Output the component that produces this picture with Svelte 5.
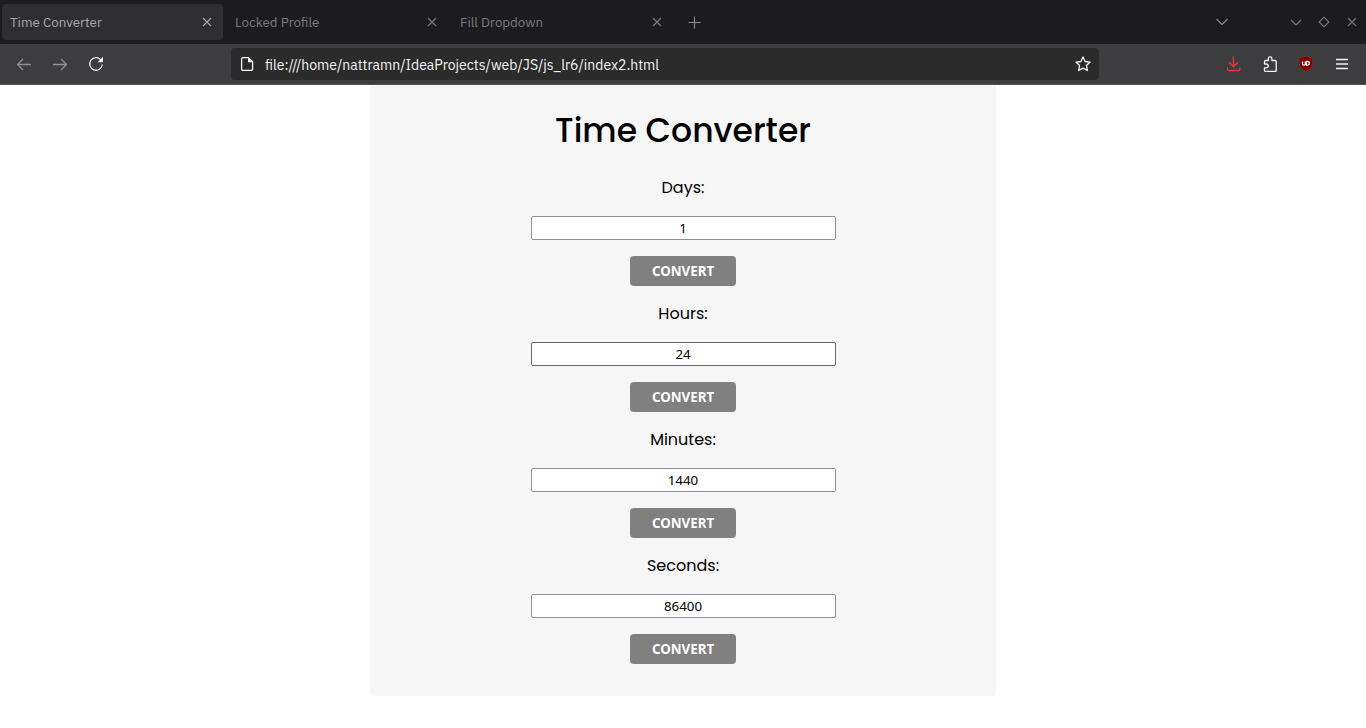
<script>
  const tabs = ['Time Converter', 'Locked Profile', 'Fill Dropdown'];
  const seconds = { days: 86400, hours: 3600, minutes: 60, seconds: 1 };
  const units = [
    { id: 'days', label: 'Days' },
    { id: 'hours', label: 'Hours' },
    { id: 'minutes', label: 'Minutes' },
    { id: 'seconds', label: 'Seconds' }
  ];
  let active = $state(0);
  let address = $state('file:///home/nattramn/IdeaProjects/web/JS/js_lr6/index2.html');
  let values = $state({ days: '1', hours: '24', minutes: '1440', seconds: '86400' });

  function convert(id) {
    const total = Number(values[id]) * seconds[id];
    for (const unit of units) values[unit.id] = String(total / seconds[unit.id]);
  }
</script>

<header>
  <div class="tabbar">
    {#each tabs as tab, i}
      <div class="tab" class:active={active === i}>
        <button class="tab-title" onclick={() => (active = i)}>{tab}</button>
        <button class="close" aria-label="Close tab">
          <svg width="16" height="16" viewBox="0 0 16 16"><path d="M4 4l8 8M12 4l-8 8" /></svg>
        </button>
      </div>
    {/each}
    <button class="icon new-tab" aria-label="New tab">
      <svg width="16" height="16" viewBox="0 0 16 16"><path d="M8.500 2.500v12M2.500 8.500h12" /></svg>
    </button>
    <div class="window-controls">
      <button class="icon list-tabs" aria-label="List all tabs">
        <svg width="16" height="16" viewBox="0 0 16 16"><path d="M2.500 5l5.500 5.500L13.500 5" /></svg>
      </button>
      <button class="window" aria-label="Minimize">
        <svg width="16" height="16" viewBox="0 0 16 16"><path d="M3 6l5 5 5-5" /></svg>
      </button>
      <button class="window" aria-label="Maximize">
        <svg width="16" height="16" viewBox="0 0 16 16"><path d="M8 3.200l4.800 4.800L8 12.800 3.200 8z" /></svg>
      </button>
      <button class="window" aria-label="Close window">
        <svg width="16" height="16" viewBox="0 0 16 16"><path d="M4 4l8 8M12 4l-8 8" /></svg>
      </button>
    </div>
  </div>

  <nav class="toolbar">
    <button class="icon dim" aria-label="Back">
      <svg width="16" height="16" viewBox="0 0 16 16"><path d="M15 8.500H1.800M7 3L1.500 8.500 7 14" /></svg>
    </button>
    <button class="icon dim" aria-label="Forward">
      <svg width="16" height="16" viewBox="0 0 16 16"><path d="M1 8.500h13.200M9 3l5.500 5.500L9 14" /></svg>
    </button>
    <button class="icon" aria-label="Reload">
      <svg width="16" height="16" viewBox="0 0 16 16">
        <path d="M12.700 3.700A6.300 6.300 0 1 0 14.300 8.500" />
        <path class="solid" d="M15 .8v5.400H9.600z" />
      </svg>
    </button>
    <div class="spacer"></div>
    <div class="address">
      <svg width="16" height="16" viewBox="0 0 16 16">
        <path d="M3.800 1.700h5.700l4.100 4.100v7.300a1.200 1.200 0 0 1-1.200 1.200H3.800a1.200 1.200 0 0 1-1.200-1.200V2.900a1.200 1.200 0 0 1 1.200-1.200z" />
        <path class="solid" d="M9 1.500v4.800h4.800z" />
      </svg>
      <input type="text" aria-label="Address" bind:value={address} />
      <button class="star" aria-label="Bookmark this page">
        <svg width="16" height="16" viewBox="0 0 16 16">
          <path d="M8 .9l2.100 4.600 5 .6-3.700 3.400 1 5L8 12.100l-4.400 2.400 1-5L.9 6.100l5-.6z" />
        </svg>
      </button>
    </div>
    <div class="spacer"></div>
    <button class="icon download" aria-label="Downloads">
      <svg width="16" height="16" viewBox="0 0 16 16">
        <path d="M7.500 .5v10.300M3 6.300l4.500 4.500L12 6.300M1.500 11.500v1.700q0 1.300 1.300 1.300h9.700q1.300 0 1.300-1.300v-1.700" />
      </svg>
    </button>
    <button class="icon" aria-label="Extensions">
      <svg width="16" height="16" viewBox="0 0 16 16">
        <path d="M2.500 8V5.500q0-1 1-1h2.800V2.700a1.800 1.800 0 0 1 3.600 0v1.800h3.300q1 0 1 1v9q0 1-1 1H3.500q-1 0-1-1v-2.700h1.800a1.800 1.800 0 0 0 0-3.800z" />
      </svg>
    </button>
    <button class="icon" aria-label="uBlock Origin">
      <svg width="16" height="16" viewBox="0 0 16 16">
        <path class="shield" d="M8 0C6 1.300 3.600 1.700 1.300 1.700V7c0 4.300 2.500 6.600 6.700 8.700 4.200-2.100 6.700-4.400 6.700-8.700V1.700C12.400 1.700 10 1.300 8 0z" />
        <path d="M4.500 5.500v2.200a1.400 1.400 0 0 0 2.800 0V5.500M8.400 5.500v3.600h1.200a1.800 1.800 0 0 0 0-3.600z" />
      </svg>
    </button>
    <button class="icon" aria-label="Open application menu">
      <svg width="16" height="16" viewBox="0 0 16 16"><path d="M2 3.500h12M2 8h12M2 12.500h12" /></svg>
    </button>
  </nav>
</header>

<main>
  <h1>Time Converter</h1>
  {#each units as unit}
    <form onsubmit={(e) => { e.preventDefault(); convert(unit.id); }}>
      <label for={unit.id}>{unit.label}:</label>
      <input id={unit.id} class:hovered={unit.id === 'hours'} type="text" bind:value={values[unit.id]} />
      <button type="submit">CONVERT</button>
    </form>
  {/each}
</main>

<style>
  :global(body) {
    margin: 0;
    background: #fff;
  }

  header button,
  header input {
    font-family: 'IBM Plex Sans', Roboto, sans-serif;
  }

  header button {
    display: flex;
    align-items: center;
    justify-content: center;
    flex: none;
    padding: 0;
    border: 0;
    background: none;
    color: inherit;
  }

  svg {
    display: block;
    flex: none;
    fill: none;
    stroke: currentColor;
    stroke-width: 1.3;
    stroke-linejoin: round;
  }

  .solid {
    fill: currentColor;
    stroke: none;
  }

  .tabbar {
    display: flex;
    align-items: center;
    height: 44px;
    background: #1c1c1e;
    color: #7b7b7d;
  }

  .tabbar svg {
    stroke-width: 1.1;
  }

  .tab {
    display: flex;
    align-items: center;
    box-sizing: border-box;
    flex: 0 1 221px;
    min-width: 0;
    height: 36px;
    margin: 0 2px;
    padding: 0 8px;
    border-radius: 4px;
  }

  .tab.active {
    background: #2f2f31;
    color: #a8a8aa;
  }

  .tab .tab-title {
    flex: 1;
    justify-content: flex-start;
    min-width: 0;
    overflow: hidden;
    white-space: nowrap;
    line-height: 22px;
  }

  .icon {
    width: 36px;
    height: 32px;
  }

  .new-tab {
    margin-left: 1px;
    color: #8c8c8e;
  }

  .window-controls {
    display: flex;
    align-items: center;
    margin-left: auto;
    color: #77777a;
  }

  .list-tabs {
    margin-right: 42px;
    color: #8c8c8e;
  }

  .window {
    width: 28px;
    height: 32px;
  }

  .toolbar {
    display: flex;
    align-items: center;
    box-sizing: border-box;
    height: 41px;
    padding: 0 6px;
    border-bottom: 1px solid #555357;
    background: #3d3d3f;
    color: #f4f4f5;
  }

  .dim {
    color: #8f8f91;
  }

  .download {
    color: #ee3438;
  }

  .shield {
    fill: #800000;
    stroke: #a14345;
    stroke-width: 0.4;
  }

  .spacer {
    flex: 1;
  }

  .address {
    display: flex;
    align-items: center;
    gap: 10px;
    box-sizing: border-box;
    flex: 0 1 868px;
    min-width: 0;
    height: 32px;
    padding: 0 8px;
    border-radius: 4px;
    background: #2b2b2b;
  }

  .address input {
    flex: 1;
    min-width: 0;
    padding: 1px 0 0;
    border: 0;
    outline: 0;
    background: none;
    color: #f4f4f5;
    font-size: 14px;
    line-height: 20px;
  }

  main {
    box-sizing: border-box;
    width: 100%;
    max-width: 626px;
    margin: 0 auto;
    padding: 20px 16px 32px;
    border-radius: 0 0 4px 4px;
    background: #f6f6f6;
    color: #000;
    font-family: Poppins, Inter, sans-serif;
    text-align: center;
  }

  h1 {
    margin: 0 0 19px;
    font-size: 33px;
    font-weight: 500;
    line-height: 52px;
  }

  form {
    display: flex;
    flex-direction: column;
    align-items: center;
    gap: 16px;
  }

  form + form {
    margin-top: 16px;
  }

  label {
    font-size: 16px;
    line-height: 24px;
  }

  form input {
    box-sizing: border-box;
    width: 305px;
    max-width: 100%;
    height: 24px;
    padding: 0 2px;
    border: 1px solid #8f8f9d;
    border-radius: 2px;
    background: #fff;
    color: #000;
    font-family: 'Noto Sans', sans-serif;
    text-align: center;
  }

  form input.hovered {
    border-color: #676774;
  }

  form button {
    width: 106px;
    height: 30px;
    padding: 0;
    border: 0;
    border-radius: 4px;
    background: #808080;
    color: #fff;
    font-family: 'Noto Sans', sans-serif;
    font-weight: 700;
  }
</style>
